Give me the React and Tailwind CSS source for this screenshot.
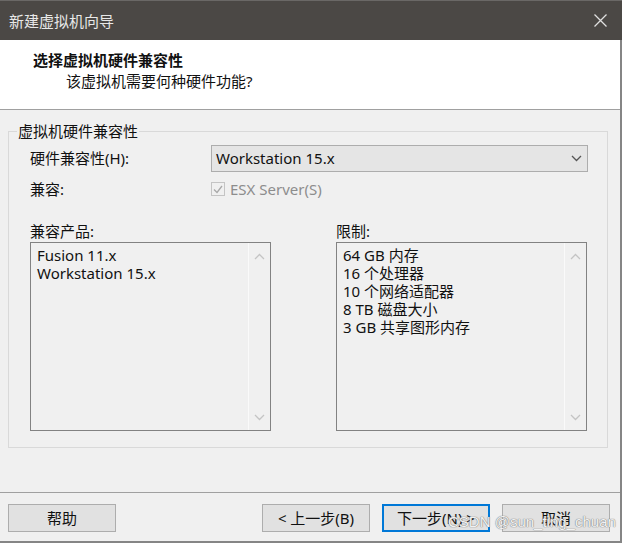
import React from 'react'

const FONT = '"Noto Sans", "Noto Sans CJK SC", sans-serif'

const compatProducts = ['Fusion 11.x', 'Workstation 15.x']
const limits = ['64 GB 内存', '16 个处理器', '10 个网络适配器', '8 TB 磁盘大小', '3 GB 共享图形内存']

const Chevron = ({ up }) => (
  <svg width="11" height="7" viewBox="0 0 11 7" className="block">
    <path d={up ? 'M1 6 L5.5 1.5 L10 6' : 'M1 1 L5.5 5.5 L10 1'} fill="none" stroke="#c4c4c4" strokeWidth="1.3" />
  </svg>
)

const ListBox = ({ items, className }) => (
  <div className={`flex h-[189px] border border-[#828282] bg-[#f0f0f0] ${className}`}>
    <div className="flex-1 pl-[6px] pt-[3px] leading-[18px] text-[#111]">
      {items.map((it) => (
        <div key={it}>{it}</div>
      ))}
    </div>
    <div className="flex w-[22px] flex-col items-center justify-between border-l border-[#fafafa] pb-[9px] pt-[10px]">
      <Chevron up />
      <Chevron />
    </div>
  </div>
)

const Button = ({ children, primary, className = '' }) => (
  <button
    className={`h-[28px] w-[108px] bg-[#e1e1e1] text-[15px] leading-[20px] text-[#111] ${
      primary ? 'border-2 border-[#0078d7]' : 'border border-[#adadad]'
    } ${className}`}
  >
    {children}
  </button>
)

export default function App() {
  return (
    <div className="relative flex h-[543px] w-[622px] flex-col bg-[#f0f0f0] text-[15px]" style={{ fontFamily: FONT }}>
      {/* title bar */}
      <div className="flex h-[40px] items-center justify-between border-t border-[#6a6866] bg-[#4b4845] pl-[9px] pr-[15px] text-[#e8e8e8]">
        <span className="leading-[20px]">新建虚拟机向导</span>
        <svg width="13" height="13" viewBox="0 0 13 13">
          <path d="M0.5 0.5 L12.5 12.5 M12.5 0.5 L0.5 12.5" stroke="#e0e0e0" strokeWidth="1.3" />
        </svg>
      </div>

      <div className="flex flex-1 flex-col border-b-2 border-r-2 border-[#858585]">
        {/* header */}
        <div className="h-[70px] border-b border-[#a0a0a0] bg-white pl-[33px] pt-[10px] leading-[21px] text-[#111]">
          <div className="font-bold">选择虚拟机硬件兼容性</div>
          <div className="pl-[33px]">该虚拟机需要何种硬件功能?</div>
        </div>

        {/* body */}
        <div className="flex-1 px-[8px]">
          <fieldset className="mt-[11px] w-[600px] border border-[#d9d9d9] p-0">
            <legend className="ml-[8px] px-[1px] leading-[20px] text-[#111]">虚拟机硬件兼容性</legend>

            <div className="pb-[16px] pl-[21px] pr-[19px] pt-[4px]">
              <div className="flex items-center">
                <span className="w-[181px] text-[#111]">硬件兼容性(H):</span>
                <div className="flex h-[27px] flex-1 items-center justify-between border border-[#adadad] bg-[#e5e5e5] pl-[4px] pr-[5px] text-[#111]">
                  <span>Workstation 15.x</span>
                  <svg width="11" height="7" viewBox="0 0 11 7">
                    <path d="M1 1 L5.5 5.5 L10 1" fill="none" stroke="#555" strokeWidth="1.3" />
                  </svg>
                </div>
              </div>

              <div className="mt-[7px] flex h-[20px] items-center">
                <span className="w-[181px] text-[#111]">兼容:</span>
                <span className="flex h-[14px] w-[14px] items-center justify-center border border-[#c4c4c4] bg-[#f0f0f0]">
                  <svg width="10" height="9" viewBox="0 0 10 9">
                    <path d="M1 4.5 L4 7.5 L9 1" fill="none" stroke="#a8a8a8" strokeWidth="1.3" />
                  </svg>
                </span>
                <span className="ml-[5px] text-[#8d8d8d]">ESX Server(S)</span>
              </div>

              <div className="mt-[22px] flex">
                <div className="w-[241px]">
                  <div className="leading-[20px] text-[#111]">兼容产品:</div>
                  <ListBox items={compatProducts} className="mt-[1px]" />
                </div>
                <div className="ml-[65px] w-[251px]">
                  <div className="leading-[20px] text-[#111]">限制:</div>
                  <ListBox items={limits} className="mt-[1px]" />
                </div>
              </div>
            </div>
          </fieldset>
        </div>

        {/* footer */}
        <div className="flex h-[49px] items-start border-t border-[#a0a0a0] pl-[8px] pr-[10px] pt-[11px]">
          <Button>帮助</Button>
          <div className="flex-1" />
          <Button>&lt; 上一步(B)</Button>
          <Button primary className="ml-[12px]">下一步(N) &gt;</Button>
          <Button className="ml-[12px]">取消</Button>
        </div>
      </div>

      {/* watermark */}
      <div
        className="absolute left-[448px] top-[512px] text-[15px] leading-[20px] text-[#f2f2f2] [text-shadow:0_0_1px_#777,0_0_1px_#777]"
        style={{ fontFamily: '"Liberation Sans", sans-serif' }}
      >
        CSDN @sun_ting_chuan
      </div>
    </div>
  )
}
